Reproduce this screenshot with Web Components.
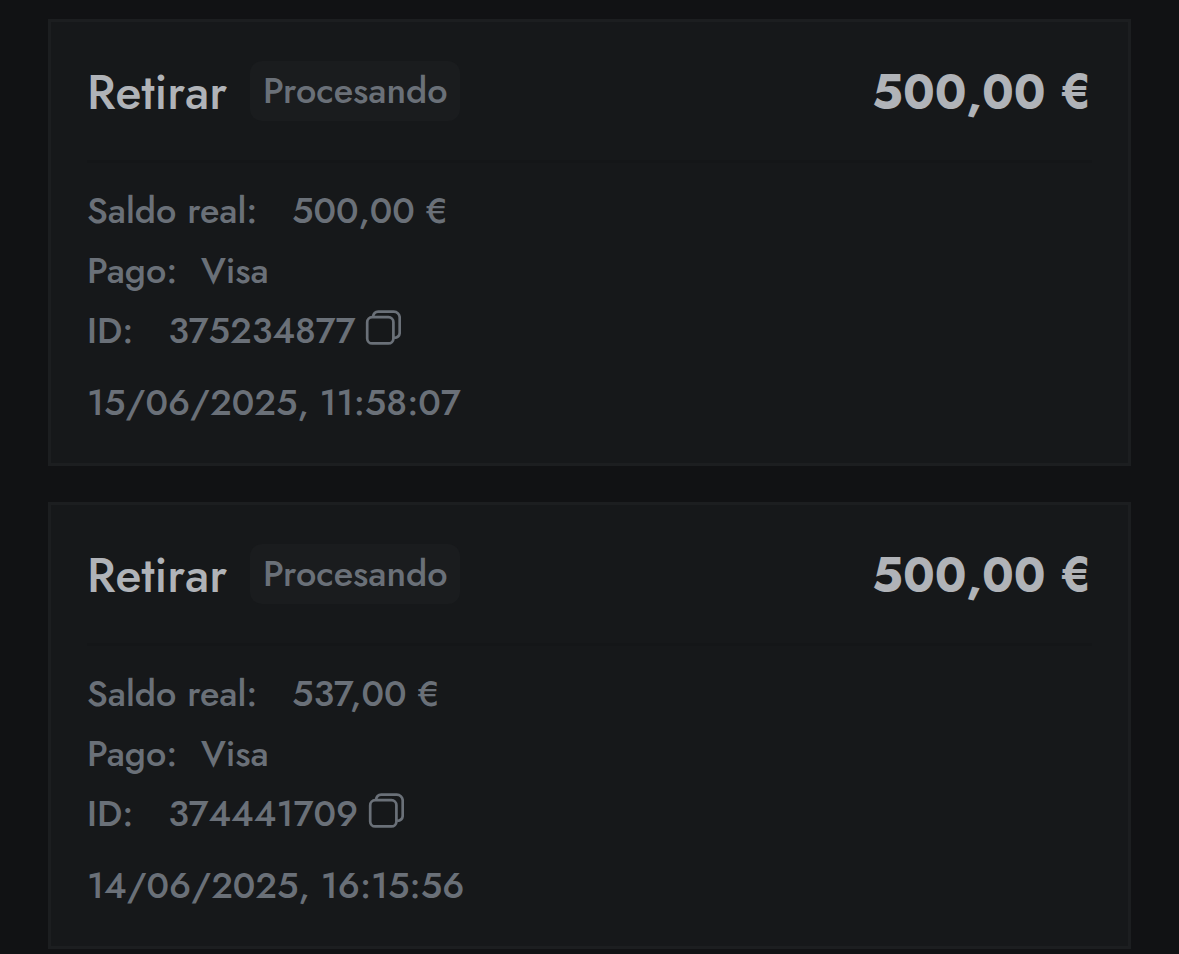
<!DOCTYPE html>
<html lang="es">
<head>
<meta charset="utf-8">
<title>Transacciones</title>
<style>
    html, body {
        margin: 0;
        background: #111214;
    }
    body {
        height: 954px;
        overflow: hidden;
        font-family: Jost, Lato, "Liberation Sans", sans-serif;
    }
</style>
</head>
<body>
<transaction-list>
    <transaction-card>
        <span slot="title">Retirar</span>
        <span slot="status">Procesando</span>
        <span slot="amount">500,00 €</span>
        <detail-row gap="34.5"><span slot="label">Saldo real:</span><span>500,00 €</span></detail-row>
        <detail-row gap="23.5"><span slot="label">Pago:</span><span>Visa</span></detail-row>
        <detail-row gap="35"><span slot="label">ID:</span><span>375234877</span><copy-icon></copy-icon></detail-row>
        <span slot="date">15/06/2025, 11:58:07</span>
    </transaction-card>
    <transaction-card>
        <span slot="title">Retirar</span>
        <span slot="status">Procesando</span>
        <span slot="amount">500,00 €</span>
        <detail-row gap="34.5"><span slot="label">Saldo real:</span><span>537,00 €</span></detail-row>
        <detail-row gap="23.5"><span slot="label">Pago:</span><span>Visa</span></detail-row>
        <detail-row gap="35"><span slot="label">ID:</span><span>374441709</span><copy-icon></copy-icon></detail-row>
        <span slot="date">14/06/2025, 16:15:56</span>
    </transaction-card>
</transaction-list>

<script>
function attach(host, html) {
    const template = document.createElement('template');
    template.innerHTML = html;
    host.attachShadow({ mode: 'open' });
    host.shadowRoot.appendChild(template.content.cloneNode(true));
}

class TransactionList extends HTMLElement {
    constructor() {
        super();
        attach(this, `
            <style>
                :host {
                    display: flex;
                    flex-direction: column;
                    gap: 36px;
                    padding: 19px 48px 0;
                }
            </style>
            <slot></slot>
        `);
    }
}

class TransactionCard extends HTMLElement {
    constructor() {
        super();
        attach(this, `
            <style>
                :host {
                    display: block;
                    box-sizing: border-box;
                    height: 447px;
                    padding: 36px;
                    border: 3px solid #1c1e20;
                    background: #16181a;
                    color: #6a7078;
                    font-size: 36px;
                    font-weight: 500;
                    line-height: 60px;
                }
                .header {
                    display: flex;
                    align-items: center;
                    box-sizing: border-box;
                    height: 105px;
                    padding: 3px 0.5px 39px 0;
                    border-bottom: 3px solid #141618;
                }
                .title, .amount {
                    color: #b0b3b8;
                    font-size: 48px;
                    padding-top: 4px;
                }
                .title {
                    width: 139px;
                }
                .amount {
                    margin-left: auto;
                    font-weight: 700;
                }
                .badge {
                    box-sizing: border-box;
                    width: 210px;
                    height: 60px;
                    margin-left: 24px;
                    padding-left: 13px;
                    border-radius: 12px;
                    background: #1a1c1e;
                    line-height: 58px;
                }
                .details {
                    margin-top: 17px;
                }
                .date {
                    margin-top: 12px;
                }
            </style>
            <div class="header">
                <div class="title"><slot name="title"></slot></div>
                <div class="badge"><slot name="status"></slot></div>
                <div class="amount"><slot name="amount"></slot></div>
            </div>
            <div class="details"><slot></slot></div>
            <div class="date"><slot name="date"></slot></div>
        `);
    }
}

class DetailRow extends HTMLElement {
    constructor() {
        super();
        attach(this, `
            <style>
                :host {
                    display: flex;
                    height: 60px;
                    white-space: nowrap;
                }
                .value {
                    display: flex;
                }
            </style>
            <slot name="label"></slot>
            <div class="value"><slot></slot></div>
        `);
    }
    connectedCallback() {
        this.shadowRoot.querySelector('.value').style.marginLeft = this.getAttribute('gap') + 'px';
    }
}

class CopyIcon extends HTMLElement {
    constructor() {
        super();
        attach(this, `
            <style>
                :host {
                    display: block;
                    width: 36px;
                    height: 36px;
                    margin: 10px 0 0 10px;
                }
                svg {
                    display: block;
                }
            </style>
            <svg width="36" height="36" viewBox="0 0 36 36" fill="none" stroke="currentColor" stroke-width="2.7">
                <rect x="2.2" y="7.2" width="26.2" height="26.2" rx="5"/>
                <path d="M8 7c.4-3.3 2-5.4 5.2-5.4h15.5a6 6 0 0 1 6 6v14.8c0 3.2-2 5.1-5.6 5.4"/>
            </svg>
        `);
    }
}

window.customElements.define('transaction-list', TransactionList);
window.customElements.define('transaction-card', TransactionCard);
window.customElements.define('detail-row', DetailRow);
window.customElements.define('copy-icon', CopyIcon);
</script>
</body>
</html>
